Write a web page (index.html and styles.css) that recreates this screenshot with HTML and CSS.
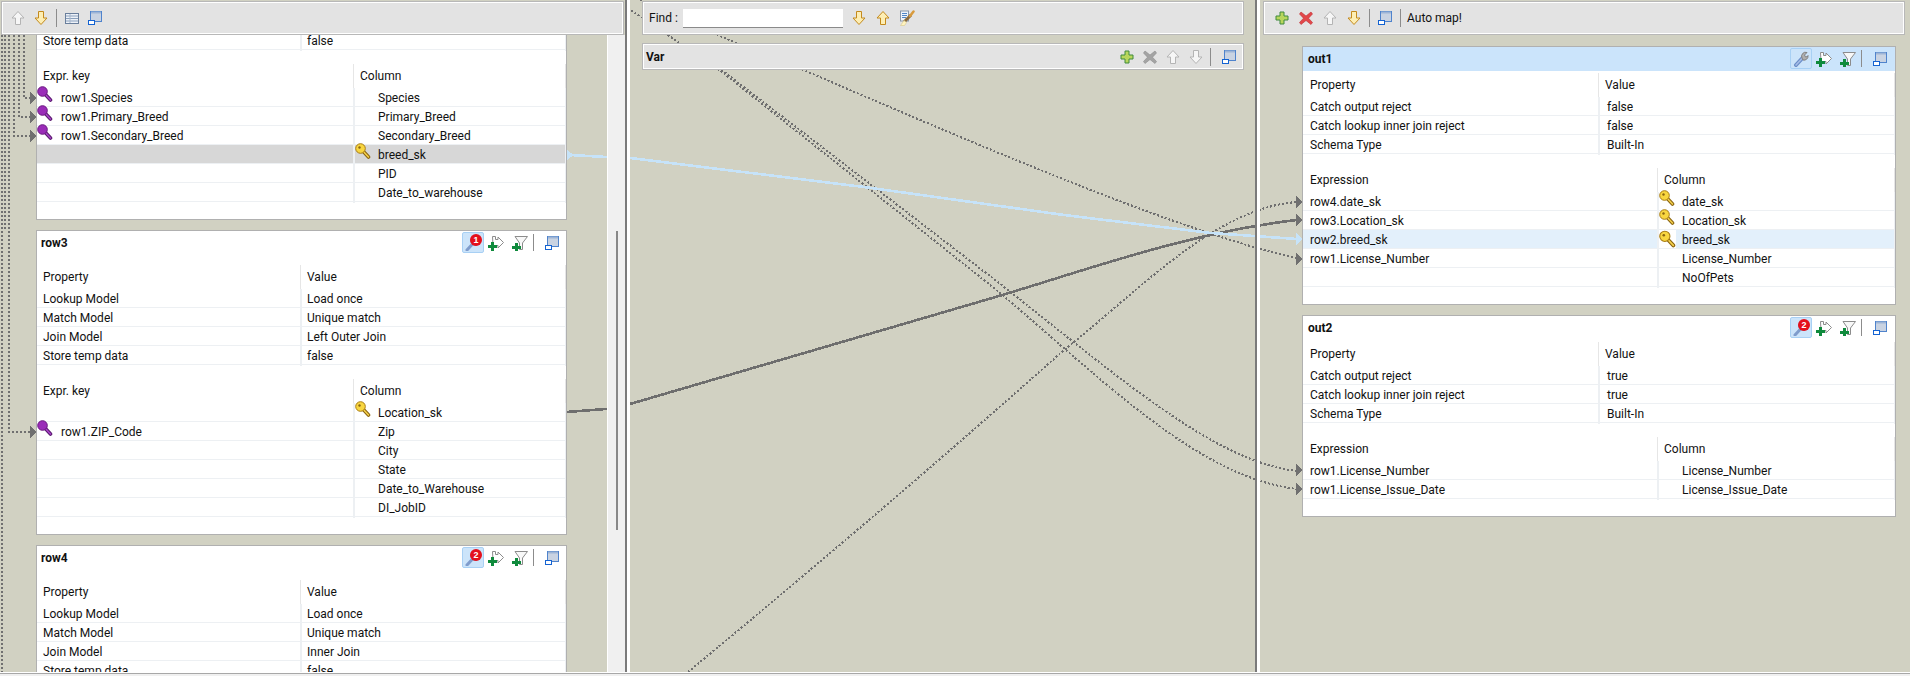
FILE: index.html
```html
<!DOCTYPE html>
<html lang="en">
<head>
    <meta charset="UTF-8">
    <title>tMap</title>
    <link rel="stylesheet" href="styles.css">
</head>
<body>
<svg class="defs" width="0" height="0">
    <symbol id="up-off" viewBox="0 0 16 16"><path d="M8 1.5L14 8H10.5V14.5H5.5V8H2Z" fill="#f6f6f6" stroke="#b4b4b4"/></symbol>
    <symbol id="down-off" viewBox="0 0 16 16"><path d="M8 14.5L14 8H10.5V1.5H5.5V8H2Z" fill="#f6f6f6" stroke="#b4b4b4"/></symbol>
    <symbol id="up-on" viewBox="0 0 16 16"><path d="M8 1.5L14 8H10.5V14.5H5.5V8H2Z" fill="#fdeeb4" stroke="#c48a1c"/></symbol>
    <symbol id="down-on" viewBox="0 0 16 16"><path d="M8 14.5L14 8H10.5V1.5H5.5V8H2Z" fill="#fdeeb4" stroke="#c48a1c"/></symbol>
    <symbol id="table" viewBox="0 0 16 16"><rect x="1.5" y="3.5" width="13" height="10" fill="#eef2f8" stroke="#6a7f9c"/><path d="M2 6h12M2 8.5h12M2 11h12" stroke="#8aa0bc"/><path d="M6 4v9" stroke="#a8b8cc"/></symbol>
    <symbol id="win" viewBox="0 0 16 16"><rect x="3.5" y="1.5" width="11" height="10" fill="#c9d3e2" stroke="#4f83cc"/><path d="M4 2.500h10" stroke="#9db4d6" stroke-width="2"/><rect x="1.5" y="10.5" width="6" height="4" fill="#fff" stroke="#1463d2"/></symbol>
    <symbol id="plus-y" viewBox="0 0 16 16"><path d="M6 2h4v4h4v4h-4v4H6v-4H2V6h4Z" fill="#b8d65c" stroke="#3f8a3c"/></symbol>
    <symbol id="x-red" viewBox="0 0 16 16"><path d="M3 2l5 4 5-4 1.500 2-4 4.200 4 4.300L13 14.500 8 10.500 3 14.500 1.500 12.500l4-4.300-4-4.200Z" fill="#e2474a" stroke="#c02c30" stroke-width=".6"/></symbol>
    <symbol id="x-off" viewBox="0 0 16 16"><path d="M3 2l5 4 5-4 1.500 2-4 4.200 4 4.300L13 14.500 8 10.500 3 14.500 1.500 12.500l4-4.300-4-4.200Z" fill="#a4a4a4" stroke="#8c8c8c" stroke-width=".6"/></symbol>
    <symbol id="key-m" viewBox="0 0 16 16"><path d="M7 7l6.500 7" stroke="#5b1a70" stroke-width="3.600" stroke-linecap="round"/><path d="M7 7l6.500 7" stroke="#a844c8" stroke-width="1.500" stroke-linecap="round"/><circle cx="5.500" cy="5.500" r="4.800" fill="#9a2cb8" stroke="#6a1a80"/></symbol>
    <symbol id="key-y" viewBox="0 0 16 16"><path d="M7 7l6.500 7" stroke="#8a6410" stroke-width="3.600" stroke-linecap="round"/><path d="M7 7l6.500 7" stroke="#f6d24c" stroke-width="1.500" stroke-linecap="round"/><circle cx="5.500" cy="5.500" r="4.800" fill="#f8d640" stroke="#a87c14"/><circle cx="4.500" cy="4.500" r="1.200" fill="#8a6410"/></symbol>
    <symbol id="arrow-add" viewBox="0 0 16 16"><path d="M4.500 1.500h3v3H10V2l5.500 5.500L10 13v-2.500H5Z" fill="#fff" stroke="#8c8c8c"/><path d="M3 7h3v3h3v3H6v3H3v-3H0v-3h3Z" fill="#0f8a3c"/></symbol>
    <symbol id="filter-add" viewBox="0 0 16 16"><path d="M3 1.500h12.500L10.500 8v6.500h-3V8Z" fill="#f8f8f8" stroke="#8c8c8c"/><path d="M3 8h3v3h3v3H6v2H3v-2H0v-3h3Z" fill="#0f8a3c"/></symbol>
    <symbol id="lens" viewBox="0 0 16 16"><path d="M2 15l6-6.500" stroke="#7f9ccc" stroke-width="3" stroke-linecap="round"/><circle cx="10" cy="6" r="4.500" fill="#e6eef8" stroke="#8ca2c4"/></symbol>
    <symbol id="wrench" viewBox="0 0 16 16"><path d="M3 14l6.500-7" stroke="#6c8ec8" stroke-width="4" stroke-linecap="round"/><path d="M3 14l6.500-7" stroke="#a6bde6" stroke-width="1.500" stroke-linecap="round"/><path d="M9 7a4 4 0 0 1 5-5.500l-2.500 2.500 1 2 2-.5 .5-1a4 4 0 0 1-5 4.500Z" fill="#b0b0b0" stroke="#808080"/></symbol>
    <symbol id="finder" viewBox="0 0 16 16"><rect x="1.500" y="1" width="8" height="10" fill="#eef3fa" stroke="#8a97a8"/><path d="M3 3.500h5M3 5.500h5M3 7.500h4" stroke="#4f86c6"/><path d="M5 12l7-7" stroke="#8a6a3c" stroke-width="3"/><path d="M11 6l3.500-4.500" stroke="#d89a3c" stroke-width="2.500" stroke-linecap="round"/><path d="M1.500 15.500L5 10.500l2.500 2-2 3Z" fill="#fff4c0" stroke="#d8c88c" stroke-width=".6"/></symbol>
</svg>

<div class="main">
    <!-- connections, drawn under the cards and bars -->
    <svg class="links" width="1910" height="673">
        <g class="dots">
            <path d="M2 35V673"/>
            <path d="M5 35V230"/>
            <path d="M9 35V432H30"/>
            <path d="M14 35V136H30"/>
            <path d="M19 35V117H30"/>
            <path d="M24 35V98H30"/>
            <path d="M628 8L675 40L723 71L999 283C1120 378 1215 462 1297 471"/>
            <path d="M628 8L675 40L722 72L999 292C1105 382 1200 478 1297 489"/>
            <path d="M688 672Q890 505 1064 350C1140 290 1215 208 1297 202"/>
            <path d="M640 0L729 40L806 71C1000 155 1190 235 1297 258"/>
        </g>
        <path class="wire" d="M566 412L606 409L630 404L999 296C1080 272 1190 232 1297 220"/>
        <path class="wire wire-sel" d="M570 155L606 157L630 158L864 187L1064 215L1211 233L1297 239"/>
        <g class="heads">
            <path d="M30 92L36 98L30 104Z"/>
            <path d="M30 111L36 117L30 123Z"/>
            <path d="M30 130L36 136L30 142Z"/>
            <path d="M30 426L36 432L30 438Z"/>
            <path d="M1296 196L1302 202L1296 208Z"/>
            <path d="M1296 214L1302 220L1296 226Z"/>
            <path d="M1296 253L1302 259L1296 265Z"/>
            <path d="M1296 464L1302 470L1296 476Z"/>
            <path d="M1296 483L1302 489L1296 495Z"/>
        </g>
        <path class="head-sel" d="M1296 233L1302 239L1296 245Z"/>
        <path class="head-sel" d="M567 150L574 155L567 160Z"/>
    </svg>

    <div class="pane pane-left">
        <div class="bar bar-left">
            <svg class="ico"><use href="#up-off"/></svg>
            <svg class="ico"><use href="#down-on"/></svg>
            <i class="sep"></i>
            <svg class="ico"><use href="#table"/></svg>
            <svg class="ico"><use href="#win"/></svg>
        </div>
        <div class="pane-body">
            <div class="scroller">
                <div class="scroll-content">
                    <div class="card">
                        <div class="tbl props">
                            <div class="row"><span>Store temp data</span><span>false</span></div>
                        </div>
                        <div class="tbl exprs">
                            <div class="row head"><span>Expr. key</span><span>Column</span></div>
                            <div class="row"><span class="ind"><svg class="key"><use href="#key-m"/></svg>row1.Species</span><span class="ind">Species</span></div>
                            <div class="row"><span class="ind"><svg class="key"><use href="#key-m"/></svg>row1.Primary_Breed</span><span class="ind">Primary_Breed</span></div>
                            <div class="row"><span class="ind"><svg class="key"><use href="#key-m"/></svg>row1.Secondary_Breed</span><span class="ind">Secondary_Breed</span></div>
                            <div class="row row-grey"><span class="ind"></span><span class="ind"><svg class="key"><use href="#key-y"/></svg>breed_sk</span></div>
                            <div class="row"><span class="ind"></span><span class="ind">PID</span></div>
                            <div class="row"><span class="ind"></span><span class="ind">Date_to_warehouse</span></div>
                        </div>
                    </div>

                    <div class="card">
                        <div class="card-head"><b>row3</b>
                            <div class="tools">
                                <span class="tool-btn"><svg class="ico"><use href="#lens"/></svg><em class="badge">1</em></span>
                                <svg class="ico"><use href="#arrow-add"/></svg>
                                <svg class="ico"><use href="#filter-add"/></svg>
                                <i class="sep"></i>
                                <svg class="ico"><use href="#win"/></svg>
                            </div>
                        </div>
                        <div class="tbl props">
                            <div class="row head"><span>Property</span><span>Value</span></div>
                            <div class="row"><span>Lookup Model</span><span>Load once</span></div>
                            <div class="row"><span>Match Model</span><span>Unique match</span></div>
                            <div class="row"><span>Join Model</span><span>Left Outer Join</span></div>
                            <div class="row"><span>Store temp data</span><span>false</span></div>
                        </div>
                        <div class="tbl exprs">
                            <div class="row head"><span>Expr. key</span><span>Column</span></div>
                            <div class="row"><span class="ind"></span><span class="ind"><svg class="key"><use href="#key-y"/></svg>Location_sk</span></div>
                            <div class="row"><span class="ind"><svg class="key"><use href="#key-m"/></svg>row1.ZIP_Code</span><span class="ind">Zip</span></div>
                            <div class="row"><span class="ind"></span><span class="ind">City</span></div>
                            <div class="row"><span class="ind"></span><span class="ind">State</span></div>
                            <div class="row"><span class="ind"></span><span class="ind">Date_to_Warehouse</span></div>
                            <div class="row"><span class="ind"></span><span class="ind">DI_JobID</span></div>
                        </div>
                    </div>

                    <div class="card">
                        <div class="card-head"><b>row4</b>
                            <div class="tools">
                                <span class="tool-btn"><svg class="ico"><use href="#lens"/></svg><em class="badge">2</em></span>
                                <svg class="ico"><use href="#arrow-add"/></svg>
                                <svg class="ico"><use href="#filter-add"/></svg>
                                <i class="sep"></i>
                                <svg class="ico"><use href="#win"/></svg>
                            </div>
                        </div>
                        <div class="tbl props">
                            <div class="row head"><span>Property</span><span>Value</span></div>
                            <div class="row"><span>Lookup Model</span><span>Load once</span></div>
                            <div class="row"><span>Match Model</span><span>Unique match</span></div>
                            <div class="row"><span>Join Model</span><span>Inner Join</span></div>
                            <div class="row"><span>Store temp data</span><span>false</span></div>
                        </div>
                    </div>
                </div>
            </div>
            <div class="vbar"><div class="thumb"></div></div>
        </div>
    </div>

    <div class="sash"></div>

    <div class="pane pane-mid">
        <div class="bar bar-find">
            <label class="find-label">Find :</label>
            <input class="find-input" type="text">
            <svg class="ico"><use href="#down-on"/></svg>
            <svg class="ico"><use href="#up-on"/></svg>
            <svg class="ico"><use href="#finder"/></svg>
        </div>
        <div class="bar bar-var">
            <b class="var-title">Var</b>
            <svg class="ico"><use href="#plus-y"/></svg>
            <svg class="ico"><use href="#x-off"/></svg>
            <svg class="ico"><use href="#up-off"/></svg>
            <svg class="ico"><use href="#down-off"/></svg>
            <i class="sep"></i>
            <svg class="ico"><use href="#win"/></svg>
        </div>
    </div>

    <div class="sash"></div>

    <div class="pane pane-right">
        <div class="bar bar-right">
            <svg class="ico"><use href="#plus-y"/></svg>
            <svg class="ico"><use href="#x-red"/></svg>
            <svg class="ico"><use href="#up-off"/></svg>
            <svg class="ico"><use href="#down-on"/></svg>
            <i class="sep"></i>
            <svg class="ico"><use href="#win"/></svg>
            <i class="sep"></i>
            <span class="auto-map">Auto map!</span>
        </div>

        <div class="card card-out card-sel">
            <div class="card-head"><b>out1</b>
                <div class="tools">
                    <span class="tool-btn"><svg class="ico"><use href="#wrench"/></svg></span>
                    <svg class="ico"><use href="#arrow-add"/></svg>
                    <svg class="ico"><use href="#filter-add"/></svg>
                    <i class="sep"></i>
                    <svg class="ico"><use href="#win"/></svg>
                </div>
            </div>
            <div class="tbl props">
                <div class="row head"><span>Property</span><span>Value</span></div>
                <div class="row"><span>Catch output reject</span><span>false</span></div>
                <div class="row"><span>Catch lookup inner join reject</span><span>false</span></div>
                <div class="row"><span>Schema Type</span><span>Built-In</span></div>
            </div>
            <div class="tbl exprs">
                <div class="row head"><span>Expression</span><span>Column</span></div>
                <div class="row"><span>row4.date_sk</span><span class="ind"><svg class="key"><use href="#key-y"/></svg>date_sk</span></div>
                <div class="row"><span>row3.Location_sk</span><span class="ind"><svg class="key"><use href="#key-y"/></svg>Location_sk</span></div>
                <div class="row row-blue"><span>row2.breed_sk</span><span class="ind"><svg class="key"><use href="#key-y"/></svg>breed_sk</span></div>
                <div class="row"><span>row1.License_Number</span><span class="ind">License_Number</span></div>
                <div class="row"><span></span><span class="ind">NoOfPets</span></div>
            </div>
        </div>

        <div class="card card-out">
            <div class="card-head"><b>out2</b>
                <div class="tools">
                    <span class="tool-btn"><svg class="ico"><use href="#lens"/></svg><em class="badge">2</em></span>
                    <svg class="ico"><use href="#arrow-add"/></svg>
                    <svg class="ico"><use href="#filter-add"/></svg>
                    <i class="sep"></i>
                    <svg class="ico"><use href="#win"/></svg>
                </div>
            </div>
            <div class="tbl props">
                <div class="row head"><span>Property</span><span>Value</span></div>
                <div class="row"><span>Catch output reject</span><span>true</span></div>
                <div class="row"><span>Catch lookup inner join reject</span><span>true</span></div>
                <div class="row"><span>Schema Type</span><span>Built-In</span></div>
            </div>
            <div class="tbl exprs">
                <div class="row head"><span>Expression</span><span>Column</span></div>
                <div class="row"><span>row1.License_Number</span><span class="ind">License_Number</span></div>
                <div class="row"><span>row1.License_Issue_Date</span><span class="ind">License_Issue_Date</span></div>
            </div>
        </div>
    </div>
</div>
<div class="foot"></div>
</body>
</html>
```

FILE: styles.css
```css
* {
    padding: 0;
    margin: 0;
    box-sizing: border-box;
}

html, body {
    height: 100%;
    overflow: hidden;
}

body {
    font-family: Roboto, "Liberation Sans", sans-serif;
    font-size: 12px;
    color: #111;
    background: #f0f0f0;
}

.defs {
    position: absolute;
}

.main {
    position: relative;
    display: flex;
    height: 673px;
    background: #d1d1c2;
    border-bottom: 1px solid #fff;
    overflow: hidden;
}

.foot {
    height: 3px;
    border-top: 1px solid #a8a8a8;
}

/* connections */
.links {
    position: absolute;
    left: 0;
    top: 0;
    fill: none;
    shape-rendering: crispEdges;
}

.dots path {
    stroke: #707070;
    stroke-width: 2;
    stroke-dasharray: 2 2;
}

.wire {
    stroke: #6e6e6e;
    stroke-width: 2.6;
}

.wire-sel {
    stroke: #c6e3f9;
}

.heads path {
    fill: #707070;
}

.head-sel {
    fill: #c6e3f9;
}

/* panes */
.pane {
    position: relative;
    display: flex;
    flex-direction: column;
}

.pane-left {
    width: 625px;
}

.pane-mid {
    width: 625px;
    padding: 1px 11px 0 12px;
    gap: 8px;
}

.pane-right {
    width: 650px;
    padding-top: 1px;
}

.sash {
    position: relative;
    width: 5px;
    background: #fff;
    border-left: 2px solid #7a7a7a;
}

.pane-body {
    flex: 1;
    display: flex;
    min-height: 0;
}

.scroller {
    width: 607px;
    overflow: hidden;
}

.scroll-content {
    margin-top: -5px;
    padding-left: 36px;
}

.vbar {
    position: relative;
    width: 18px;
    background: #f0f0f0;
    border-left: 1px solid #fff;
}

.thumb {
    width: 2px;
    height: 299px;
    margin: 196px 0 0 8px;
    background: #888;
}

/* toolbars */
.bar {
    position: relative;
    display: flex;
    align-items: center;
    flex: none;
    height: 34px;
    background: #e3e3e3;
    border: 1px solid #b8b8b8;
    box-shadow: inset 0 0 0 1px #fff;
}

.bar-left {
    width: 623px;
    margin: 1px 0 0 1px;
    padding-left: 8px;
    gap: 7px;
}

.bar-find {
    padding-left: 6px;
    gap: 8px;
}

.find-label {
    width: 26px;
    white-space: nowrap;
}

.find-input {
    width: 160px;
    height: 19px;
    background: #fff;
    border: none;
    border-bottom: 1px solid #8a8a8a;
}

.bar-var {
    height: 27px;
    padding-right: 6px;
    gap: 7px;
}

.var-title {
    margin: 0 auto 0 3px;
}

.bar-var .sep {
    margin: 0 3px 0 -1px;
}

.bar-right {
    width: 642px;
    margin-left: 3px;
    padding-left: 10px;
    gap: 8px;
}

.bar-right .sep {
    margin: 0 -1px;
}

.auto-map {
    margin-left: -1px;
}

.ico {
    display: block;
    flex: none;
    width: 16px;
    height: 16px;
}

.sep {
    display: block;
    flex: none;
    width: 1px;
    height: 18px;
    background: #8c8c8c;
}

/* cards */
.card {
    position: relative;
    width: 531px;
    margin-bottom: 10px;
    padding-bottom: 17px;
    background: #fff;
    border: 1px solid #b0b0b0;
}

.card-out {
    width: 594px;
    margin: 0 0 0 42px;
}

.bar + .card-out {
    margin-top: 11px;
}

.card-out + .card-out {
    margin-top: 10px;
}

.card-head {
    display: flex;
    justify-content: space-between;
    height: 34px;
    padding: 1px 6px 0 4px;
    line-height: 21px;
}

.card-head b {
    line-height: 23px;
}

.card-out .card-head {
    height: 26px;
    padding-right: 7px;
    padding-left: 5px;
}

.card-sel .card-head {
    height: 24px;
    margin-bottom: 2px;
    background: #cbe4fb;
}

.tools {
    display: flex;
    align-items: center;
    height: 21px;
    gap: 8px;
}

.tools .sep {
    height: 17px;
    margin: 0 2px 0 -3px;
}

.tool-btn {
    position: relative;
    display: flex;
    align-items: center;
    justify-content: center;
    width: 22px;
    height: 21px;
    margin-right: -4px;
    background: #cce4fa;
    border: 1px solid #a8d0f4;
    border-radius: 2px;
}

.badge {
    position: absolute;
    top: 1px;
    right: 1px;
    width: 12px;
    height: 12px;
    border-radius: 50%;
    background: #e4101c;
    color: #fff;
    font: bold 9px/12px "Liberation Sans", sans-serif;
    text-align: center;
}

/* tables */
.tbl {
    margin-bottom: 14px;
}

.tbl:last-child {
    margin-bottom: 0;
}

.row {
    display: grid;
    height: 19px;
    line-height: 20px;
    border-bottom: 1px solid #edf0f3;
}

.props .row {
    grid-template-columns: 264px 1fr;
}

.exprs .row {
    grid-template-columns: 317px 1fr;
}

.card-out .props .row {
    grid-template-columns: 296px 1fr;
}

.card-out .exprs .row {
    grid-template-columns: 355px 1fr;
}

.row span {
    position: relative;
    padding-left: 6px;
    white-space: nowrap;
    border-right: 1px solid #edf0f3;
}

.card-out .row span {
    padding-left: 7px;
}

.row span + span {
    border-left: 1px solid #edf0f3;
    padding-left: 5px;
}

.row span.ind {
    padding-left: 24px;
}

.row span + span.ind,
.card-out .row span + span.ind {
    padding-left: 23px;
}

.row.head {
    height: 24px;
    line-height: 24px;
    border-bottom: none;
}

.row.head span {
    border-color: #e6e6e6;
}

.row.head span + span {
    border-left: none;
    padding-left: 6px;
}

.row-grey {
    background: #d7d7d7;
}

.row-blue {
    background: #e3f0fb;
}

.key {
    position: absolute;
    left: 0;
    top: -2px;
    width: 16px;
    height: 16px;
}

.row-blue .key {
    top: 0;
    width: 17px;
    height: 18px;
    background: #fff;
}
```
